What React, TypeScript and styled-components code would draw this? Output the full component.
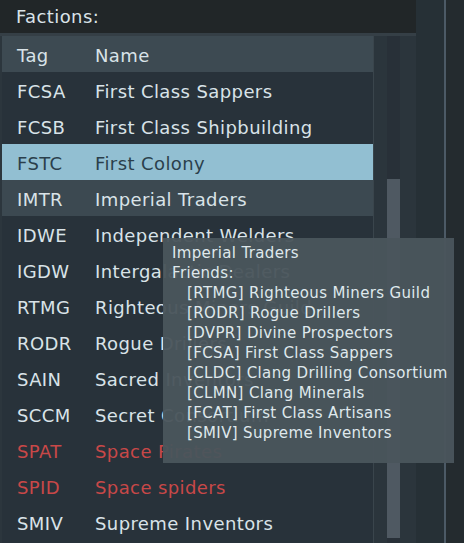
import React from "react";
import styled, { createGlobalStyle } from "styled-components";

const Global = createGlobalStyle`
  html, body { margin: 0; padding: 0; background: #242b2f; overflow: hidden; }
  body { font-family: "DejaVu Sans", "Liberation Sans", sans-serif; }
`;

const Frame = styled.div`
  position: relative;
  display: flex;
  width: 464px;
  height: 543px;
  background: #242b2f;
`;

const LeftPanel = styled.div`
  width: 416px;
  display: flex;
  flex-direction: column;
  background: #2c363d;
`;

const Strip = styled.div`
  width: 28px;
  background: #263036;
`;

const Divider = styled.div`
  width: 2px;
  background: #4c5a66;
`;

const FarRight = styled.div`
  flex: 1;
  background: #242b2f;
`;

const Header = styled.div`
  height: 33px;
  display: flex;
  align-items: center;
  padding-left: 16px;
  background: #212628;
  border-bottom: 3px solid #353f46;
  color: #d9e3e8;
  font-size: 18px;
  letter-spacing: 0.4px;
`;

const Body = styled.div`
  flex: 1;
  display: flex;
  min-height: 0;
`;

const List = styled.div`
  width: 371px;
  margin-left: 2px;
  display: flex;
  flex-direction: column;
  background: #28323a;
`;

type RowKind = "head" | "normal" | "selected" | "hover";

const rowBg: Record<RowKind, string> = {
  head: "#3d4a52",
  normal: "transparent",
  selected: "#92bfd2",
  hover: "#3c4951",
};

const Row = styled.div<{ $kind: RowKind; $red?: boolean }>`
  height: 36px;
  box-sizing: border-box;
  padding-top: 3px;
  flex: none;
  display: flex;
  align-items: center;
  padding-left: 15px;
  font-size: 18px;
  letter-spacing: 0.4px;
  background: ${(p) => rowBg[p.$kind]};
  color: ${(p) =>
    p.$kind === "selected" ? "#2b3f4c" : p.$red ? "#c84848" : "#d9e3e8"};
`;

const TagCell = styled.span`
  width: 78px;
  flex: none;
`;

const NameCell = styled.span`
  white-space: nowrap;
`;

const ScrollArea = styled.div`
  flex: 1;
  display: flex;
  border-left: 1px solid #3a454c;
  background: #2a343b;
`;

const TrackSide = styled.div<{ $w: number }>`
  width: ${(p) => p.$w}px;
  background: #2b353c;
`;

const Track = styled.div`
  width: 13px;
  display: flex;
  flex-direction: column;
  background: #283038;
`;

const Thumb = styled.div`
  margin-top: 143px;
  height: 359px;
  background: #4f5962;
`;

const Tooltip = styled.div`
  position: absolute;
  left: 163px;
  top: 238px;
  width: 291px;
  height: 225px;
  box-sizing: border-box;
  padding: 5px 9px;
  background: rgba(74, 85, 92, 0.96);
  color: #dfe8ec;
  font-size: 15px;
  line-height: 20px;
  letter-spacing: 0.35px;
`;

const TipLine = styled.div<{ $indent?: boolean }>`
  padding-left: ${(p) => (p.$indent ? 15 : 0)}px;
  white-space: nowrap;
`;

const factions: { tag: string; name: string; kind?: RowKind; red?: boolean }[] = [
  { tag: "FCSA", name: "First Class Sappers" },
  { tag: "FCSB", name: "First Class Shipbuilding" },
  { tag: "FSTC", name: "First Colony", kind: "selected" },
  { tag: "IMTR", name: "Imperial Traders", kind: "hover" },
  { tag: "IDWE", name: "Independent Welders" },
  { tag: "IGDW", name: "Intergalactic Dealers" },
  { tag: "RTMG", name: "Righteous Miners Guild" },
  { tag: "RODR", name: "Rogue Drillers" },
  { tag: "SAIN", name: "Sacred Inventors" },
  { tag: "SCCM", name: "Secret Consortium" },
  { tag: "SPAT", name: "Space Pirates", red: true },
  { tag: "SPID", name: "Space spiders", red: true },
  { tag: "SMIV", name: "Supreme Inventors" },
];

const friends = [
  "[RTMG] Righteous Miners Guild",
  "[RODR] Rogue Drillers",
  "[DVPR] Divine Prospectors",
  "[FCSA] First Class Sappers",
  "[CLDC] Clang Drilling Consortium",
  "[CLMN] Clang Minerals",
  "[FCAT] First Class Artisans",
  "[SMIV] Supreme Inventors",
];

export default function App() {
  return (
    <>
      <Global />
      <Frame>
        <LeftPanel>
          <Header>Factions:</Header>
          <Body>
            <List>
              <Row $kind="head">
                <TagCell>Tag</TagCell>
                <NameCell>Name</NameCell>
              </Row>
              {factions.map((f) => (
                <Row key={f.tag} $kind={f.kind ?? "normal"} $red={f.red}>
                  <TagCell>{f.tag}</TagCell>
                  <NameCell>{f.name}</NameCell>
                </Row>
              ))}
            </List>
            <ScrollArea>
              <TrackSide $w={13} />
              <Track>
                <Thumb />
              </Track>
              <TrackSide $w={16} />
            </ScrollArea>
          </Body>
        </LeftPanel>
        <Strip />
        <Divider />
        <FarRight />
        <Tooltip>
          <TipLine>Imperial Traders</TipLine>
          <TipLine>Friends:</TipLine>
          {friends.map((f) => (
            <TipLine key={f} $indent>
              {f}
            </TipLine>
          ))}
        </Tooltip>
      </Frame>
    </>
  );
}
